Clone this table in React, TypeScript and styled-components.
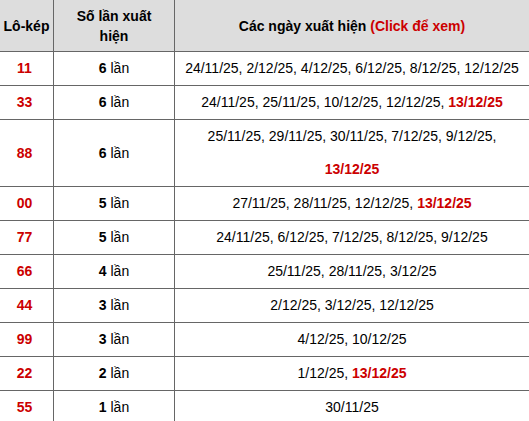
import styled, { createGlobalStyle } from "styled-components";

const GlobalStyle = createGlobalStyle`
    body {
        margin: 0;
        background: #fff;
        font-family: "Liberation Sans", Arial, sans-serif;
        font-size: 14px;
        color: #000;
    }
`

const Table = styled.table`
    width: 100%;
    table-layout: fixed;
    border-collapse: separate;
    border-spacing: 0;
`

const HeadCell = styled.th<{ $w?: number; $pad?: string; $last?: boolean }>`
    ${p => p.$w ? `width: ${p.$w}px;` : ''}
    box-sizing: border-box;
    background: #dddddd;
    font-weight: bold;
    line-height: 20px;
    padding: 6px ${p => p.$pad || '6px'} 5px;
    text-align: center;
    border-bottom: 1px solid #666;
    border-right: ${p => p.$last ? 'none' : '1px solid #666'};
`

const LoCell = styled.td`
    padding: 0 4px 0 0;
    text-align: center;
    color: #cc0000;
    font-weight: bold;
    line-height: 33px;
    border-bottom: 1px solid #666;
    border-right: 1px solid #666;
`

const CountCell = styled.td`
    padding: 0;
    text-align: center;
    line-height: 33px;
    border-bottom: 1px solid #666;
    border-right: 1px solid #666;
`

const Count = styled.b`
    font-weight: bold;
`

const DateCell = styled.td`
    padding: 0 5px;
    text-align: center;
    line-height: 33px;
    border-bottom: 1px solid #666;
`

const Red = styled.span`
    color: #cc0000;
    font-weight: bold;
`

type Row = { lo: string; count: number; dates: string[]; hot?: string }

const rows: Row[] = [
    { lo: '11', count: 6, dates: ['24/11/25', '2/12/25', '4/12/25', '6/12/25', '8/12/25', '12/12/25'] },
    { lo: '33', count: 6, dates: ['24/11/25', '25/11/25', '10/12/25', '12/12/25'], hot: '13/12/25' },
    { lo: '88', count: 6, dates: ['25/11/25', '29/11/25', '30/11/25', '7/12/25', '9/12/25'], hot: '13/12/25' },
    { lo: '00', count: 5, dates: ['27/11/25', '28/11/25', '12/12/25'], hot: '13/12/25' },
    { lo: '77', count: 5, dates: ['24/11/25', '6/12/25', '7/12/25', '8/12/25', '9/12/25'] },
    { lo: '66', count: 4, dates: ['25/11/25', '28/11/25', '3/12/25'] },
    { lo: '44', count: 3, dates: ['2/12/25', '3/12/25', '12/12/25'] },
    { lo: '99', count: 3, dates: ['4/12/25', '10/12/25'] },
    { lo: '22', count: 2, dates: ['1/12/25'], hot: '13/12/25' },
    { lo: '55', count: 1, dates: ['30/11/25'] },
]

function App() {
    return (
        <>
            <GlobalStyle/>
            <Table>
                <thead>
                <tr>
                    <HeadCell $w={54} $pad="4px 0 0">Lô-kép</HeadCell>
                    <HeadCell $w={121} $pad="12px">Số lần xuất hiện</HeadCell>
                    <HeadCell $last>Các ngày xuất hiện <Red>(Click để xem)</Red></HeadCell>
                </tr>
                </thead>
                <tbody>
                {rows.map(r => (
                    <tr key={r.lo}>
                        <LoCell>{r.lo}</LoCell>
                        <CountCell><Count>{r.count}</Count> lần</CountCell>
                        <DateCell>
                            {r.dates.join(', ')}
                            {r.hot && <>, <Red>{r.hot}</Red></>}
                        </DateCell>
                    </tr>
                ))}
                </tbody>
            </Table>
        </>
    )
}

export default App
